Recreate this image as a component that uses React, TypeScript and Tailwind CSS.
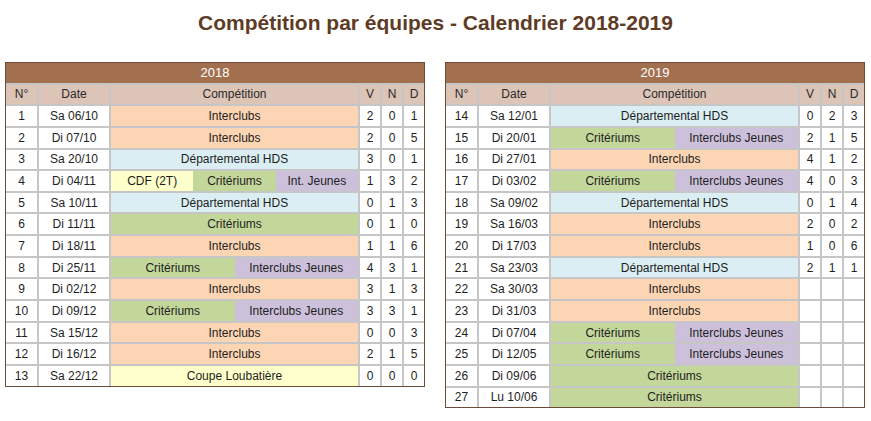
import React from "react";

type Seg = { t: string; c: string };
type Row = { n: number; d: string; segs: Seg[]; v?: string[] };

const IC = "bg-[#fcd5b4]";
const DH = "bg-[#daeef3]";
const CR = "bg-[#c4d79b]";
const IJ = "bg-[#ccc0da]";
const YE = "bg-[#ffffcc]";

const ic: Seg[] = [{ t: "Interclubs", c: IC }];
const dh: Seg[] = [{ t: "Départemental HDS", c: DH }];
const cr: Seg[] = [{ t: "Critériums", c: CR }];
const crij: Seg[] = [
  { t: "Critériums", c: CR },
  { t: "Interclubs Jeunes", c: IJ },
];

const y2018: Row[] = [
  { n: 1, d: "Sa 06/10", segs: ic, v: ["2", "0", "1"] },
  { n: 2, d: "Di 07/10", segs: ic, v: ["2", "0", "5"] },
  { n: 3, d: "Sa 20/10", segs: dh, v: ["3", "0", "1"] },
  {
    n: 4,
    d: "Di 04/11",
    segs: [
      { t: "CDF (2T)", c: YE },
      { t: "Critériums", c: CR },
      { t: "Int. Jeunes", c: IJ },
    ],
    v: ["1", "3", "2"],
  },
  { n: 5, d: "Sa 10/11", segs: dh, v: ["0", "1", "3"] },
  { n: 6, d: "Di 11/11", segs: cr, v: ["0", "1", "0"] },
  { n: 7, d: "Di 18/11", segs: ic, v: ["1", "1", "6"] },
  { n: 8, d: "Di 25/11", segs: crij, v: ["4", "3", "1"] },
  { n: 9, d: "Di 02/12", segs: ic, v: ["3", "1", "3"] },
  { n: 10, d: "Di 09/12", segs: crij, v: ["3", "3", "1"] },
  { n: 11, d: "Sa 15/12", segs: ic, v: ["0", "0", "3"] },
  { n: 12, d: "Di 16/12", segs: ic, v: ["2", "1", "5"] },
  { n: 13, d: "Sa 22/12", segs: [{ t: "Coupe Loubatière", c: YE }], v: ["0", "0", "0"] },
];

const y2019: Row[] = [
  { n: 14, d: "Sa 12/01", segs: dh, v: ["0", "2", "3"] },
  { n: 15, d: "Di 20/01", segs: crij, v: ["2", "1", "5"] },
  { n: 16, d: "Di 27/01", segs: ic, v: ["4", "1", "2"] },
  { n: 17, d: "Di 03/02", segs: crij, v: ["4", "0", "3"] },
  { n: 18, d: "Sa 09/02", segs: dh, v: ["0", "1", "4"] },
  { n: 19, d: "Sa 16/03", segs: ic, v: ["2", "0", "2"] },
  { n: 20, d: "Di 17/03", segs: ic, v: ["1", "0", "6"] },
  { n: 21, d: "Sa 23/03", segs: dh, v: ["2", "1", "1"] },
  { n: 22, d: "Sa 30/03", segs: ic },
  { n: 23, d: "Di 31/03", segs: ic },
  { n: 24, d: "Di 07/04", segs: crij },
  { n: 25, d: "Di 12/05", segs: crij },
  { n: 26, d: "Di 09/06", segs: cr },
  { n: 27, d: "Lu 10/06", segs: cr },
];

const cell = "flex items-center justify-center";

function Table({ year, rows }: { year: string; rows: Row[] }) {
  return (
    <div className="w-[420px] border border-[#6b4c3b] bg-[#c6c6c6] grid grid-cols-[31px_70px_1fr_20px_20px_20px] auto-rows-[19.65px] gap-[2px] text-[12px] text-[#1e1e1e]">
      <div className={`${cell} col-span-6 bg-[#a3704f] text-white text-[13px]`}>{year}</div>
      {["N°", "Date", "Compétition", "V", "N", "D"].map((h) => (
        <div key={h} className={`${cell} bg-[#dcc4b6] text-[#2a2a2a]`}>
          {h}
        </div>
      ))}
      {rows.map((r) => (
        <React.Fragment key={r.n}>
          <div className={`${cell} bg-white`}>{r.n}</div>
          <div className={`${cell} bg-white`}>{r.d}</div>
          <div className="flex">
            {r.segs.map((s, i) => (
              <div key={i} className={`${cell} flex-1 ${s.c}`}>
                {s.t}
              </div>
            ))}
          </div>
          {[0, 1, 2].map((i) => (
            <div key={i} className={`${cell} bg-white`}>
              {r.v ? r.v[i] : ""}
            </div>
          ))}
        </React.Fragment>
      ))}
    </div>
  );
}

export default function App() {
  return (
    <div
      className="w-[871px] h-[421px] bg-white"
      style={{ fontFamily: '"Liberation Sans", Arial, sans-serif' }}
    >
      <h1 className="pt-[11px] h-[62px] text-center text-[21px] leading-[24px] font-bold text-[#5e3b25]">
        Compétition par équipes - Calendrier 2018-2019
      </h1>
      <div className="flex items-start gap-[20px] pl-[5px]">
        <Table year="2018" rows={y2018} />
        <Table year="2019" rows={y2019} />
      </div>
    </div>
  );
}
